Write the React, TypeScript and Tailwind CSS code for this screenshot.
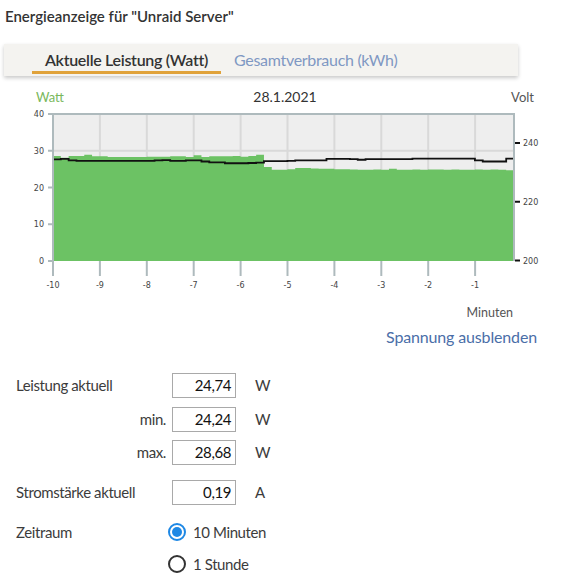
import React from 'react';

// Power samples (W), one every 10 s over the last ten minutes
const power = [
  28.6, 28.1, 28.6, 28.6, 28.9, 28.5, 28.5, 28.3, 28.3, 28.3, 28.3, 28.3, 28.4, 28.4, 28.4,
  28.5, 28.5, 28.3, 28.8, 28.3, 28.5, 28.5, 28.5, 28.6, 28.4, 28.6, 28.9, 25.6, 24.8, 24.8,
  25.0, 25.3, 25.3, 25.2, 25.1, 25.1, 25.0, 25.0, 24.9, 24.8, 24.8, 24.9, 24.8, 25.1, 24.8,
  24.8, 24.9, 24.8, 24.9, 24.9, 24.8, 24.9, 24.8, 24.8, 24.9, 24.8, 24.9, 24.8, 24.7,
];

// Voltage samples (V) for the same intervals
const voltage = [
  234.4, 234.6, 234.1, 233.9, 233.9, 233.9, 233.9, 233.9, 233.9, 233.9, 233.9, 233.9, 233.9, 234.1, 234.2,
  233.9, 233.9, 234.1, 234.1, 233.7, 233.4, 233.4, 233.1, 233.1, 233.1, 233.2, 233.3, 233.8, 233.8, 233.8,
  233.9, 234.1, 234.1, 234.1, 234.1, 234.6, 234.6, 234.6, 234.5, 234.3, 234.5, 234.5, 234.5, 234.5, 234.5,
  234.5, 234.7, 234.7, 234.7, 234.7, 234.7, 234.7, 234.7, 234.7, 234.1, 233.7, 233.7, 233.7, 234.7,
];

// plot frame in page pixels (svg viewBox starts at page y 107)
const PL = 53;
const PR = 514;
const PT = 114;
const PB = 261;
const MIN_W = 46.9;

const yW = (w: number) => PB - (w / 40) * (PB - PT);
const yV = (v: number) => 260.5 - ((v - 200) / 40) * 117.5;

function PowerChart() {
  const step = (PR - PL) / power.length;
  const minutes = [-10, -9, -8, -7, -6, -5, -4, -3, -2, -1];

  let area = `M ${PL} ${PB}`;
  power.forEach((w, i) => {
    area += ` L ${PL + i * step} ${yW(w)} L ${PL + (i + 1) * step} ${yW(w)}`;
  });
  area += ` L ${PR} ${PB} Z`;

  let line = '';
  voltage.forEach((v, i) => {
    line += `${i === 0 ? 'M' : 'L'} ${PL + i * step} ${yV(v)} L ${PL + (i + 1) * step} ${yV(v)} `;
  });

  return (
    <svg width={570} height={190} viewBox="0 107 570 190" className="block">
      <rect x={PL} y={PT} width={PR - PL} height={PB - PT} fill="#eeeeee" />
      {minutes.map((m) => {
        const x = PL + (m + 10) * MIN_W;
        return <line key={m} x1={x} y1={PT} x2={x} y2={PB} stroke="#d9d9d9" strokeWidth={2} />;
      })}
      <line x1={PL} y1={yW(30)} x2={PR} y2={yW(30)} stroke="#d9d9d9" strokeWidth={2} />
      <path d={area} fill="#6cc264" />
      <path d={line} fill="none" stroke="#111" strokeWidth={1.8} />

      {/* frame */}
      <path d={`M ${PL} ${PB + 1} L ${PL} ${PT} L ${PR} ${PT} L ${PR} ${PB}`} fill="none" stroke="#aebabd" strokeWidth={2} />

      {/* left axis */}
      {[0, 10, 20, 30, 40].map((w) => (
        <g key={w}>
          <line x1={48} y1={yW(w)} x2={PL} y2={yW(w)} stroke="#aebabd" strokeWidth={2} />
          <text x={44} y={yW(w) + 3} textAnchor="end" fontSize={8} fill="#444" fontFamily="DejaVu Sans, sans-serif">
            {w}
          </text>
        </g>
      ))}

      {/* right axis */}
      {[200, 220, 240].map((v) => (
        <g key={v}>
          <line x1={515} y1={yV(v)} x2={520} y2={yV(v)} stroke="#111" strokeWidth={2} />
          <text x={523} y={yV(v) + 3} fontSize={8} fill="#444" fontFamily="DejaVu Sans, sans-serif">
            {v}
          </text>
        </g>
      ))}

      {/* time axis */}
      {minutes.map((m) => {
        const x = PL + (m + 10) * MIN_W;
        return (
          <g key={m}>
            <line x1={x} y1={PB} x2={x} y2={276} stroke="#aebabd" strokeWidth={2} />
            <text x={x} y={288} textAnchor="middle" fontSize={8} fill="#444" fontFamily="DejaVu Sans, sans-serif">
              {m}
            </text>
          </g>
        );
      })}
    </svg>
  );
}

function Radio({ checked, label }: { checked?: boolean; label: string }) {
  return (
    <label className="flex items-center gap-[7px]">
      <span
        className={`w-[18px] h-[18px] rounded-full border-2 flex items-center justify-center ${
          checked ? 'border-[#1e88e5]' : 'border-[#333]'
        }`}
      >
        {checked && <span className="w-[10px] h-[10px] rounded-full bg-[#1e88e5]" />}
      </span>
      <span>{label}</span>
    </label>
  );
}

function ValueRow({ label, value, unit, right }: { label: string; value: string; unit: string; right?: boolean }) {
  return (
    <div className="flex items-center">
      <span className={`w-[150px] mr-[6px] ${right ? 'text-right' : ''}`}>{label}</span>
      <span className="w-[64px] h-[25px] border border-[#a9a9a9] text-right pr-[4px] leading-[23px] text-[#111]">
        {value}
      </span>
      <span className="ml-[19px]">{unit}</span>
    </div>
  );
}

export default function App() {
  return (
    <div className="w-[570px] h-[580px] bg-white overflow-hidden font-['Lato',sans-serif] text-[#3c3c3c]">
      <h1 className="pl-[5px] pt-[6px] leading-[20px] text-[15px] font-semibold text-[#333]">
        Energieanzeige für "Unraid Server"
      </h1>

      <div className="ml-[4px] mt-[18px] w-[514px] h-[32px] bg-[#f4f3f0] shadow-[0_2px_4px_rgba(0,0,0,0.22)] flex text-[16px] tracking-[-0.3px]">
        <div className="ml-[28px] w-[189px] h-[30px] pt-[6px] leading-[20px] text-center border-b-[3px] border-[#e0a23a] font-semibold text-[#333]">
          Aktuelle Leistung (Watt)
        </div>
        <div className="ml-[13px] h-[30px] pt-[6px] leading-[20px] text-[#7f98c3]">Gesamtverbrauch (kWh)</div>
      </div>

      <div className="ml-[36px] mt-[11px] w-[498px] h-[20px] leading-[20px] grid grid-cols-[1fr_auto_1fr]">
        <span className="text-[13px] text-[#7ab85c]">Watt</span>
        <span className="text-[14px] text-[#333]">28.1.2021</span>
        <span className="text-[13px] text-right text-[#555]">Volt</span>
      </div>

      <PowerChart />

      <div className="mt-[8px] h-[16px] leading-[16px] pr-[57px] text-right text-[12.5px] text-[#555]">Minuten</div>
      <div className="mt-[6px] h-[20px] leading-[20px] pr-[33px] text-right text-[16px] tracking-[-0.15px] text-[#4a6ea8]">
        Spannung ausblenden
      </div>

      <div className="mt-[26px] pl-[16px] text-[15px] tracking-[-0.4px]">
        <ValueRow label="Leistung aktuell" value="24,74" unit="W" />
        <div className="mt-[9px]">
          <ValueRow label="min." value="24,24" unit="W" right />
        </div>
        <div className="mt-[8px]">
          <ValueRow label="max." value="28,68" unit="W" right />
        </div>
        <div className="mt-[15px]">
          <ValueRow label="Stromstärke aktuell" value="0,19" unit="A" />
        </div>
        <div className="mt-[15px] flex items-center h-[24px]">
          <span className="w-[152px]">Zeitraum</span>
          <Radio checked label="10 Minuten" />
        </div>
        <div className="mt-[8px] flex items-center h-[24px] pl-[152px]">
          <Radio label="1 Stunde" />
        </div>
      </div>
    </div>
  );
}
